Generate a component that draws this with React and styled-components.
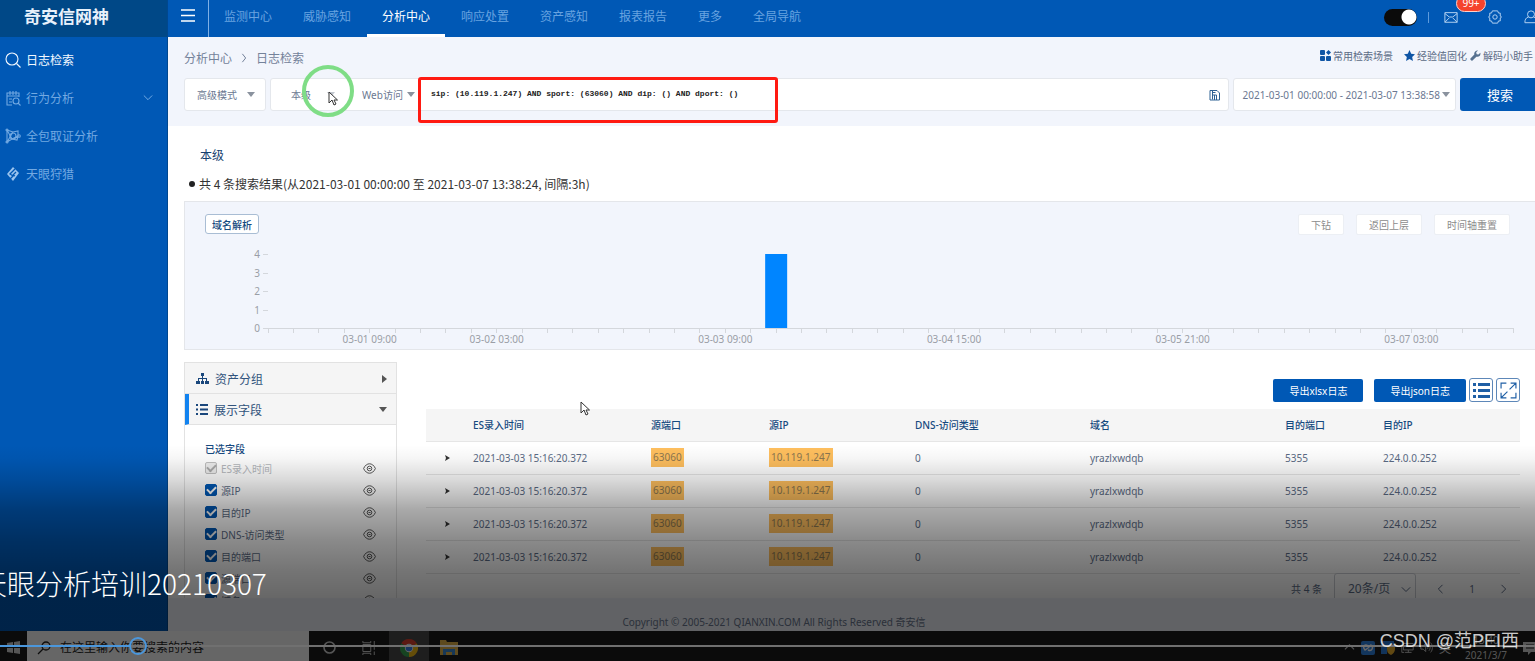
import { useState } from "react";
import styled, { createGlobalStyle } from "styled-components";

const GlobalStyle = createGlobalStyle`
  * {
    box-sizing: border-box;
  }
  body {
    margin: 0;
    overflow: hidden;
    font-family: "Noto Sans", "Noto Sans CJK SC", sans-serif;
    font-size: 10px;
    color: #5b6b85;
  }
  button, input, select {
    font-family: inherit;
    font-size: inherit;
    color: inherit;
  }
  h1, h2, h3, p, ul {
    margin: 0;
    padding: 0;
  }
  ul {
    list-style: none;
  }
  a {
    color: inherit;
    text-decoration: none;
  }
  svg {
    display: block;
    flex: none;
  }`

const Screen = styled.div`
  position: relative;
  display: flex;
  flex-direction: column;
  height: 100vh;
  overflow: hidden;`

const Page = styled.div`
  display: flex;
  flex: 1;
  min-height: 0;
  background-color: #f2f5fc;`

// Sidebar
const Sidebar = styled.aside`
  width: 168px;
  flex: none;
  background-color: #0058b5;
  border-right: 1px solid #00478f;`

const Brand = styled.h1`
  height: 37px;
  padding-left: 24px;
  line-height: 34px;
  font-size: 17px;
  font-weight: 700;
  color: #e8f1fb;
  background-color: #004887;`

const Menu = styled.ul`
  padding-top: 4px;`

const MenuLink = styled.a`
  display: flex;
  align-items: center;
  gap: 5px;
  height: 38px;
  padding: 0 14px 0 5px;
  font-size: 12px;
  color: ${({ $active }) => ($active ? "#f2f8ff" : "#72a9e2")};

  span {
    flex: 1;
  }`

// Header
const Main = styled.main`
  display: flex;
  flex-direction: column;
  flex: 1;
  min-width: 0;`

const Header = styled.header`
  display: flex;
  height: 37px;
  flex: none;
  background-color: #0058b5;`

const Burger = styled.button`
  display: flex;
  justify-content: center;
  width: 41px;
  padding: 9px 0 0;
  border: 0;
  border-right: 1px solid #7fb0e6;
  background: none;
  color: #fff;`

const Tabs = styled.nav`
  display: flex;
  gap: 1px;
  flex: 1;`

const Tab = styled.a`
  padding: 0 15px;
  line-height: 34px;
  font-size: 12px;
  color: ${({ $active }) => ($active ? "#fff" : "#68a3e0")};
  border-bottom: 3px solid ${({ $active }) => ($active ? "#fff" : "transparent")};`

const Tools = styled.div`
  display: flex;
  align-items: center;
  height: 34px;
  margin-right: -3px;
  color: #b5d3f3;`

const Switch = styled.input`
  appearance: none;
  width: 33px;
  height: 17px;
  margin: 0 11px 0 0;
  border-radius: 9px;
  background: radial-gradient(circle at 25px 8px, #fff 7px, #0b0b0b 8px);`

const Bar = styled.i`
  width: 1px;
  height: 11px;
  margin-right: 15px;
  background-color: #5e9bdc;`

const IconButton = styled.button`
  position: relative;
  padding: 0;
  margin: 0 ${({ $after = 0 }) => $after}px 0 0;
  border: 0;
  background: none;`

const Badge = styled.span`
  position: absolute;
  left: 12px;
  top: -15px;
  width: 30px;
  height: 17px;
  border: 1px solid #ffd0c8;
  border-radius: 9px;
  line-height: 15px;
  font-size: 10px;
  color: #fff;
  background-color: #f5432d;`

// Search area
const SearchArea = styled.section`
  position: relative;
  flex: none;
  height: 89px;
  padding-left: 16px;
  background-color: #f2f5fc;`

const TopLine = styled.div`
  display: flex;
  align-items: center;
  justify-content: space-between;
  height: 41px;
  padding-right: 2px;`

const Crumbs = styled.nav`
  display: flex;
  align-items: center;
  gap: 7px;
  font-size: 12px;
  color: #74829a;`

const Shortcuts = styled.div`
  display: flex;
  gap: 11px;
  padding-bottom: 4px;

  a {
    display: flex;
    align-items: center;
    gap: 2px;
  }
  a:last-child {
    margin-left: -8px;
  }`

const FilterRow = styled.form`
  display: flex;
  gap: 4px;`

const Field = styled.div`
  display: flex;
  align-items: center;
  flex: ${({ $grow }) => ($grow ? 1 : "none")};
  min-width: 0;
  height: 33px;
  border: 1px solid #e4e7ec;
  border-radius: 3px;
  background-color: #fff;
  color: #6b7891;`

const SelectBox = styled.label`
  display: grid;
  align-items: center;
  width: ${({ $width }) => $width}px;

  select, svg {
    grid-area: 1 / 1;
  }
  svg {
    justify-self: end;
    margin-right: ${({ $right = 10 }) => $right}px;
    pointer-events: none;
  }
  select {
    appearance: none;
    width: 100%;
    height: 30px;
    padding: 0 0 0 ${({ $left = 12 }) => $left}px;
    border: 0;
    background: none;
  }`

const Query = styled.input`
  flex: 1;
  min-width: 0;
  height: 30px;
  padding: 0 0 2px 14px;
  border: 0;
  background: none;
  font-family: "Liberation Mono", monospace;
  font-size: 8px;
  font-weight: 700;
  color: #222;`

const DateButton = styled.button`
  display: flex;
  align-items: center;
  gap: 2px;
  height: 30px;
  padding: 0 5px 0 9px;
  border: 0;
  background: none;`

const SearchButton = styled.button`
  width: 80px;
  height: 33px;
  margin-right: -5px;
  border: 0;
  border-radius: 3px;
  font-size: 13px;
  color: #fff;
  background-color: #0058b5;`

const Highlight = styled.div`
  position: absolute;
  left: 250px;
  top: 40px;
  width: 360px;
  height: 46px;
  border: 3px solid #ff1a12;
  border-radius: 3px;`

const ClickRing = styled.div`
  position: absolute;
  left: 134px;
  top: 28px;
  width: 52px;
  height: 52px;
  border: 4px solid #7fdd86;
  border-radius: 50%;`

const Pointer = styled.svg`
  position: absolute;
  left: ${({ $x }) => $x}px;
  top: ${({ $y }) => $y}px;`

// Results
const Results = styled.section`
  position: relative;
  flex: 1;
  min-height: 0;
  overflow: hidden;
  padding: 20px 0 0 16px;
  background-color: #fff;`

const Level = styled.h2`
  padding-left: 16px;
  line-height: 20px;
  font-size: 12px;
  font-weight: 400;
  color: #163f70;`

const Summary = styled.p`
  display: flex;
  align-items: center;
  gap: 4px;
  height: 35px;
  padding-left: 5px;
  font-family: "Noto Sans CJK SC", sans-serif;
  font-size: 12px;
  color: #333;

  &::before {
    content: "";
    width: 6px;
    height: 6px;
    border-radius: 50%;
    background-color: #222;
  }`

const ChartPanel = styled.div`
  height: 149px;
  border: 1px solid #e4e6ea;
  border-width: 1px 0 1px 1px;
  background-color: #f2f5fc;`

const ChartTop = styled.div`
  display: flex;
  align-items: center;
  gap: 12px;
  height: 44px;
  padding: 0 25px 0 20px;`

const Tag = styled.button`
  height: 20px;
  margin-right: auto;
  padding: 0 6px;
  border: 1px solid #a9bdd4;
  border-radius: 3px;
  font-weight: 500;
  color: #164a80;
  background-color: #fff;`

const PlainButton = styled.button`
  height: 21px;
  padding: 0 12px;
  border: 1px solid #eceff4;
  border-radius: 2px;
  color: #8c8c8c;
  background-color: #fff;`

const ChartSvg = styled.svg`
  width: calc(100% - 105px);
  height: 100px;
  margin-left: 83px;
  overflow: visible;

  text {
    font-size: 10px;
    fill: #9a9ea6;
  }
  line {
    stroke: #d4d7dc;
    shape-rendering: crispEdges;
  }`

const Columns = styled.div`
  display: flex;
  align-items: flex-start;
  gap: 29px;
  padding: 12px 15px 0 0;`

const SidePanel = styled.div`
  flex: none;
  width: 213px;
  height: 260px;
  border: 1px solid #e2e2e2;`

const PanelHead = styled.button`
  display: flex;
  align-items: center;
  gap: 6px;
  width: 100%;
  height: 31px;
  padding: 1px 9px 0 ${({ $open }) => ($open ? 7 : 11)}px;
  border: 0;
  border-left: ${({ $open }) => ($open ? "4px solid #1283f0" : "0")};
  border-bottom: 1px solid #e2e2e2;
  font-size: 12px;
  color: #31537c;
  background-color: #f5f5f5;

  span {
    flex: 1;
    text-align: left;
  }`

const FieldTitle = styled.h3`
  padding: 16px 20px 0;
  line-height: 16px;
  font-size: 10px;
  font-weight: 500;
  color: #164a80;`

const FieldItem = styled.li`
  display: flex;
  align-items: center;
  justify-content: space-between;
  height: 22px;
  padding: 0 20px;
  color: ${({ $off }) => ($off ? "#b5b8bd" : "#5b6b85")};

  label {
    display: flex;
    align-items: center;
    gap: 4px;
  }`

const Check = styled.input`
  appearance: none;
  display: grid;
  place-items: center;
  width: 12px;
  height: 12px;
  margin: 0;
  border: 1px solid ${({ disabled }) => (disabled ? "#bfbfbf" : "#0058b5")};
  border-radius: 2px;
  background-color: ${({ disabled }) => (disabled ? "#eee" : "#0058b5")};

  &:checked::after {
    content: "";
    width: 7px;
    height: 4px;
    margin-bottom: 2px;
    border: solid ${({ disabled }) => (disabled ? "#aaa" : "#fff")};
    border-width: 0 0 2px 2px;
    rotate: -45deg;
  }`

const TableSide = styled.div`
  flex: 1;
  min-width: 0;
  padding-top: 16px;`

const Exports = styled.div`
  display: flex;
  align-items: center;
  justify-content: flex-end;
  gap: 3px;
  height: 24px;
  margin-bottom: 7px;`

const ExportButton = styled.button`
  height: 23px;
  padding: 0 16px;
  margin-left: 8px;
  border: 0;
  border-radius: 2px;
  color: #fff;
  background-color: #0058b5;`

const ViewButton = styled.button`
  display: grid;
  place-items: center;
  width: 24px;
  height: 24px;
  padding: 0;
  border: 1px solid #5d87b8;
  border-radius: 3px;
  background-color: #fff;
  color: #1f5fa5;`

const Table = styled.table`
  width: 100%;
  table-layout: fixed;
  border-collapse: collapse;

  th, td {
    height: 33px;
    padding: 0;
    border-bottom: 1px solid #e6e6e6;
    text-align: left;
    white-space: nowrap;
  }
  th {
    height: 32px;
    font-weight: 500;
    color: #164a80;
    background-color: #f5f5f5;
  }
  td:first-child button {
    display: block;
    padding: 0 0 0 19px;
    border: 0;
    background: none;
  }`

const Mark = styled.mark`
  display: inline-block;
  padding: 0 2px;
  line-height: 19px;
  color: #8d7750;
  background-color: #ffbf5e;`

const Pager = styled.div`
  display: flex;
  align-items: center;
  justify-content: flex-end;
  height: 30px;

  button {
    display: flex;
    justify-content: center;
    width: 32px;
    padding: 0;
    border: 0;
    background: none;
  }`

const PageSize = styled.div`
  margin: 0 8px 0 12px;
  border: 1px solid #c9ccd2;
  border-radius: 3px;
  font-size: 12px;`

const Copyright = styled.footer`
  flex: none;
  height: 33px;
  padding-right: 155px;
  line-height: 48px;
  text-align: center;
  font-size: 10px;
  color: #6b7891;`

// Taskbar
const Taskbar = styled.div`
  display: flex;
  flex: none;
  height: 30px;
  background-color: #1b1b1b;
  color: #d5d5d5;`

const TaskButton = styled.button`
  display: grid;
  place-items: center;
  width: ${({ $width = 40 }) => $width}px;
  padding: 3px 0 0;
  border: 0;
  background-color: ${({ $active }) => ($active ? "#4a4a4a" : "transparent")};`

const TaskSearch = styled.label`
  display: flex;
  align-items: center;
  gap: 9px;
  width: 282px;
  padding: 3px 10px 0;
  color: #222;
  background-color: #fff;

  input {
    flex: 1;
    padding: 0;
    border: 0;
    background: none;
    font-size: 12px;
  }
  input::placeholder {
    color: #222;
    opacity: 1;
  }`

const Tray = styled.div`
  display: flex;
  align-items: center;
  gap: 6px;
  margin-left: auto;
  margin-right: -2px;
  padding-top: 3px;
  font-size: 12px;`

const Clock = styled.time`
  width: 58px;
  margin-right: 2px;
  line-height: 15px;
  text-align: center;
  font-size: 10px;`

// Player controls lie over the whole screen
const Player = styled.div`
  position: absolute;
  left: 0;
  right: 0;
  bottom: 0;
  height: 216px;
  background: linear-gradient(
    rgba(0, 0, 0, 0) 0,
    rgba(0, 0, 0, 0.04) 14px,
    rgba(0, 0, 0, 0.15) 35px,
    rgba(0, 0, 0, 0.34) 65px,
    rgba(0, 0, 0, 0.46) 95px,
    rgba(0, 0, 0, 0.54) 125px,
    rgba(0, 0, 0, 0.6) 155px
  );`

const VideoTitle = styled.div`
  position: absolute;
  left: -21px;
  bottom: 58px;
  line-height: 40px;
  font-family: "Noto Sans CJK SC", sans-serif;
  font-size: 28px;
  font-weight: 300;
  white-space: nowrap;
  color: #fff;`

const Progress = styled.input`
  position: absolute;
  left: 0;
  bottom: 6px;
  width: 100%;
  height: 18px;
  margin: 0;
  appearance: none;
  background: none;

  &::-webkit-slider-runnable-track {
    height: 2px;
    background: linear-gradient(90deg, #4b97dc ${({ $done }) => $done}%, #707070 0);
  }
  &::-webkit-slider-thumb {
    appearance: none;
    width: 18px;
    height: 18px;
    margin-top: -8px;
    border: 2px solid #4b97dc;
    border-radius: 50%;
    background: none;
  }`

const Watermark = styled.div`
  position: absolute;
  right: 16px;
  bottom: 6px;
  line-height: 28px;
  font-family: "Liberation Sans", "Noto Sans CJK SC", sans-serif;
  font-size: 18px;
  color: rgba(255, 255, 255, 0.8);`

const Caret = ({ size = 8, color = "#8a929e" }) => (
  <svg width={size} height="5" viewBox="0 0 8 5"><path d="M0 0h8L4 5z" fill={color}/></svg>
)

const Chevron = ({ d = "M3 1l5 5-5 5", size = 10 }) => (
  <svg width={size} height={size} viewBox="0 0 12 12" fill="none" stroke="currentColor" strokeWidth="1.2">
    <path d={d}/>
  </svg>
)

const Line = ({ size = 15, children }) => (
  <svg width={size} height={size} viewBox="0 0 16 16" fill="none" stroke="currentColor" strokeWidth="1.1">
    {children}
  </svg>
)

const Cursor = ({ x, y }) => (
  <Pointer $x={x} $y={y} width="10" height="15" viewBox="0 0 10 15">
    <path d="M1 1v11l3-3 2 5 2-1-2-4h3.500z" fill="#fff" stroke="#333"/>
  </Pointer>
)

const Eye = () => (
  <svg width="13" height="11" viewBox="0 0 13 11" fill="none" stroke="#555" strokeWidth="1">
    <path d="M.6 5.500C3.400-.8 9.600-.8 12.400 5.500C9.600 11.800 3.400 11.800.6 5.500z"/>
    <circle cx="6.500" cy="5.500" r="2.300"/>
    <path d="M5.500 5.500h2"/>
  </svg>
)

const menu = [
  { title: "日志检索", active: true, icon: <Line size={16}><circle cx="7" cy="7" r="6"/><path d="M11.500 11.500l4 4"/></Line> },
  {
    title: "行为分析",
    more: true,
    icon: <Line size={16}><path d="M14 7V3H2v12h5M5 1v4M8 1v4M11 1v4M2 6h12M4 9h3M4 12h3"/><circle cx="11" cy="11" r="3"/><path d="M13 13l2.500 2.500"/></Line>,
  },
  {
    title: "全包取证分析",
    icon: <Line size={16}><path d="M2 2l6 2 5-1v5l-1 4-5-1-5 3zM2 2l5 9M8 4l-6 10M13 8L7 11"/><circle cx="8" cy="8" r="3"/><circle cx="2" cy="2" r="1"/><circle cx="2" cy="14" r="1"/><circle cx="14" cy="8" r="1.300"/></Line>,
  },
  {
    title: "天眼狩猎",
    icon: (
      <svg width="16" height="16" viewBox="0 0 16 16">
        <path d="M8 1l6 6-6 8-6-7z" fill="#9cc4ee"/>
        <path d="M10 3L5 8l3 2-3 3M11 6L8 9l2 1" fill="none" stroke="#0058b5" strokeWidth="1.300"/>
      </svg>
    ),
  },
]

const tabs = ["监测中心", "威胁感知", "分析中心", "响应处置", "资产感知", "报表报告", "更多", "全局导航"]
const fields = ["ES录入时间", "源IP", "目的IP", "DNS-访问类型", "目的端口", "源端口", "域名"]
const heads = ["ES录入时间", "源端口", "源IP", "DNS-访问类型", "域名", "目的端口", "目的IP"]
const widths = [47, 178, 118, 146, 175, 195, 98, 137]
const logs = [1, 2, 3, 4].map((id) => ({
  id,
  time: "2021-03-03 15:16:20.372",
  port: "63060",
  ip: "10.119.1.247",
  type: "0",
  domain: "yrazlxwdqb",
  toPort: "5355",
  toIp: "224.0.0.252",
}))

const dates = [
  [4, "03-01 09:00"],
  [9, "03-02 03:00"],
  [18, "03-03 09:00"],
  [27, "03-04 15:00"],
  [36, "03-05 21:00"],
  [45, "03-07 03:00"],
]
const STEPS = 49
const BASE = 82
const at = (i) => `${(i / STEPS) * 100}%`

const Chart = () => (
  <ChartSvg>
    {[0, 1, 2, 3, 4].map((n) => (
      <g key={n}>
        <text x="-8" y={Math.round(BASE - n * 18.5) + 4} textAnchor="end">{n}</text>
        <line x1="-5" x2="0" y1={Math.round(BASE - n * 18.5)} y2={Math.round(BASE - n * 18.5)}/>
      </g>
    ))}
    <line x1="0" x2="100%" y1={BASE} y2={BASE}/>
    {Array.from({ length: STEPS + 1 }, (_, i) => (
      <line key={i} x1={at(i)} x2={at(i)} y1={BASE} y2={BASE + 5}/>
    ))}
    {dates.map(([i, text]) => (
      <text key={text} x={at(i)} y={BASE + 15} textAnchor="middle">{text}</text>
    ))}
    <svg x={at(20)} y={BASE - 74} overflow="visible">
      <rect x="-11" width="22" height="74" fill="#0085ff"/>
    </svg>
  </ChartSvg>
)

const App = () => {
  const [query, setQuery] = useState("sip: (10.119.1.247) AND sport: (63060) AND dip: () AND dport: ()")
  const [progress, setProgress] = useState(8.5)

  return (
    <Screen>
      <GlobalStyle/>
      <Page>
        <Sidebar>
          <Brand>奇安信网神</Brand>
          <Menu>
            {menu.map(({ title, active, more, icon }) => (
              <li key={title}>
                <MenuLink href="#" $active={active}>
                  {icon}
                  <span>{title}</span>
                  {more && <Chevron d="M1 3l5 5 5-5"/>}
                </MenuLink>
              </li>
            ))}
          </Menu>
        </Sidebar>
        <Main>
          <Header>
            <Burger aria-label="菜单">
              <svg width="14" height="13" viewBox="0 0 14 13" stroke="currentColor" strokeWidth="1.500">
                <path d="M0 1h14M0 6.500h14M0 12h14"/>
              </svg>
            </Burger>
            <Tabs>
              {tabs.map((tab) => (
                <Tab key={tab} href="#" $active={tab === "分析中心"}>{tab}</Tab>
              ))}
            </Tabs>
            <Tools>
              <Switch type="checkbox" role="switch" aria-label="主题" defaultChecked/>
              <Bar/>
              <IconButton aria-label="消息" $after={30}>
                <Line size={14}><path d="M1 3h14v11H1zM1 4l5 4h4l5-4M1 14l5-5M15 14l-5-5"/></Line>
                <Badge>99+</Badge>
              </IconButton>
              <IconButton aria-label="设置" $after={22}>
                <Line size={14}><path d="M5 1h6l1 2.500h2V7l1.500 1L14 9v3.500h-2L11 15H5l-1-2.500H2V9L.5 8 2 7V3.500h2z"/><circle cx="8" cy="8" r="2.500"/></Line>
              </IconButton>
              <IconButton aria-label="用户">
                <Line size={14}><circle cx="8" cy="5" r="4"/><path d="M5 8c-3 1-4 3-4 6.500h14c0-3.500-1-5.500-4-6.500"/></Line>
              </IconButton>
            </Tools>
          </Header>
          <SearchArea>
            <TopLine>
              <Crumbs>
                <a href="#">分析中心</a>
                <Chevron d="M4 1l4 5-4 5"/>
                <a href="#">日志检索</a>
              </Crumbs>
              <Shortcuts>
                <a href="#">
                  <svg width="11" height="11" viewBox="0 0 11 11" fill="#0f55a5">
                    <rect width="5" height="5" rx="1"/><rect y="6" width="5" height="5" rx="1"/><path d="M8.500 0L11 2.500 8.500 5 6 2.500z"/><rect x="6" y="6" width="5" height="5" rx="1"/>
                  </svg>
                  常用检索场景
                </a>
                <a href="#">
                  <svg width="11" height="11" viewBox="0 0 24 24" fill="#0f55a5"><path d="M12 0l3.700 8 8.300 1-6.200 6 1.700 9-7.500-4.500L4.500 24l1.700-9L0 9l8.300-1z"/></svg>
                  经验值固化
                </a>
                <a href="#">
                  <svg width="11" height="11" viewBox="0 0 24 24" fill="#56708f"><path d="M22.500 6l-4 4-4-1-1-4 4-4C13 0 8 4 9.500 10L1 18.500C-.5 21 3 24.500 5.500 23L14 14.500c6 1.500 10-3.500 8.500-8.500z"/></svg>
                  解码小助手
                </a>
              </Shortcuts>
            </TopLine>
            <FilterRow onSubmit={(e) => e.preventDefault()}>
              <Field>
                <SelectBox $width={80}>
                  <select aria-label="模式"><option>高级模式</option></select>
                  <Caret/>
                </SelectBox>
              </Field>
              <Field $grow>
                <SelectBox $width={70} $left={20} $right={6}>
                  <select aria-label="级别"><option>本级</option></select>
                  <Caret color="#c3c8d0"/>
                </SelectBox>
                <SelectBox $width={76} $left={21} $right={2}>
                  <select aria-label="类型"><option>Web访问</option></select>
                  <Caret/>
                </SelectBox>
                <Query aria-label="查询" value={query} onChange={(e) => setQuery(e.target.value)}/>
                <IconButton type="button" aria-label="保存" $after={8}>
                  <svg width="11" height="12" viewBox="0 0 11 12" fill="none" stroke="#2f6294">
                    <path d="M1 1.500h7l2.500 2.500v7H1zM3.500 1.500v9M3.500 6h4v5M5.500 6v5M3.500 3.500h3"/>
                  </svg>
                </IconButton>
              </Field>
              <Field>
                <DateButton type="button">2021-03-01 00:00:00 - 2021-03-07 13:38:58 <Caret/></DateButton>
              </Field>
              <SearchButton>搜索</SearchButton>
            </FilterRow>
            <ClickRing/>
            <Highlight/>
            <Cursor x={160} y={54}/>
          </SearchArea>
          <Results>
            <Level>本级</Level>
            <Summary>共 4 条搜索结果(从2021-03-01 00:00:00 至 2021-03-07 13:38:24, 间隔:3h)</Summary>
            <ChartPanel>
              <ChartTop>
                <Tag>域名解析</Tag>
                <PlainButton>下钻</PlainButton>
                <PlainButton>返回上层</PlainButton>
                <PlainButton>时间轴重置</PlainButton>
              </ChartTop>
              <Chart/>
            </ChartPanel>
            <Columns>
              <SidePanel>
                <PanelHead>
                  <svg width="13" height="11" viewBox="0 0 13 11" fill="#1a477c">
                    <path d="M5 0h3v3H7v2h4v3h2v3H9V8h1V6H7v2h1v3H5V8h1V6H3v2h1v3H0V8h2V5h4V3H5z"/>
                  </svg>
                  <span>资产分组</span>
                  <svg width="5" height="8" viewBox="0 0 5 8"><path d="M0 0v8l5-4z" fill="#555"/></svg>
                </PanelHead>
                <PanelHead $open>
                  <svg width="12" height="11" viewBox="0 0 12 11" fill="#1a477c">
                    <path d="M0 0h2v2H0zM4 0h8v2H4zM0 4.500h2v2H0zM4 4.500h8v2H4zM0 9h2v2H0zM4 9h8v2H4z"/>
                  </svg>
                  <span>展示字段</span>
                  <Caret color="#555"/>
                </PanelHead>
                <FieldTitle>已选字段</FieldTitle>
                <ul>
                  {fields.map((name, i) => (
                    <FieldItem key={name} $off={i === 0}>
                      <label><Check type="checkbox" defaultChecked disabled={i === 0}/>{name}</label>
                      <Eye/>
                    </FieldItem>
                  ))}
                </ul>
              </SidePanel>
              <TableSide>
                <Exports>
                  <ExportButton>导出xlsx日志</ExportButton>
                  <ExportButton>导出json日志</ExportButton>
                  <ViewButton aria-label="列表">
                    <svg width="17" height="15" viewBox="0 0 17 15" fill="currentColor">
                      <path d="M0 0h3v3H0zM5 0h12v3H5zM0 6h3v3H0zM5 6h12v3H5zM0 12h3v3H0zM5 12h12v3H5z"/>
                    </svg>
                  </ViewButton>
                  <ViewButton aria-label="全屏">
                    <Line size={17}><path d="M1 6V1h5M10 1h5v5M15 10v5h-5M6 15H1v-5M15 1L9 7M7 9l-6 6"/></Line>
                  </ViewButton>
                </Exports>
                <Table>
                  <colgroup>
                    {widths.map((w, i) => <col key={i} width={w}/>)}
                  </colgroup>
                  <thead>
                    <tr>
                      <th/>
                      {heads.map((head) => <th key={head}>{head}</th>)}
                    </tr>
                  </thead>
                  <tbody>
                    {logs.map((log) => (
                      <tr key={log.id}>
                        <td>
                          <button aria-label="展开">
                            <svg width="5" height="6" viewBox="0 0 5 6"><path d="M0 0l5 3-5 3 1-3z" fill="#333"/></svg>
                          </button>
                        </td>
                        <td>{log.time}</td>
                        <td><Mark>{log.port}</Mark></td>
                        <td><Mark>{log.ip}</Mark></td>
                        <td>{log.type}</td>
                        <td>{log.domain}</td>
                        <td>{log.toPort}</td>
                        <td>{log.toIp}</td>
                      </tr>
                    ))}
                  </tbody>
                </Table>
                <Pager>
                  共 4 条
                  <PageSize>
                    <SelectBox $width={80} $left={13} $right={4}>
                      <select aria-label="每页条数"><option>20条/页</option></select>
                      <Chevron d="M1 4l5 5 5-5"/>
                    </SelectBox>
                  </PageSize>
                  <button aria-label="上一页"><Chevron d="M9 1L4 6l5 5"/></button>
                  <button>1</button>
                  <button aria-label="下一页"><Chevron/></button>
                </Pager>
              </TableSide>
            </Columns>
            <Cursor x={412} y={275}/>
          </Results>
          <Copyright>Copyright © 2005-2021 QIANXIN.COM All Rights Reserved 奇安信</Copyright>
        </Main>
      </Page>
      <Taskbar>
        <TaskButton $width={27} aria-label="开始">
          <svg width="13" height="13" viewBox="0 0 13 13" fill="currentColor"><path d="M0 2l6-1v5H0zM7 1l6-1v6H7zM0 7h6v5l-6-1zM7 7h6v6l-6-1z"/></svg>
        </TaskButton>
        <TaskSearch>
          <svg width="14" height="14" viewBox="0 0 14 14" fill="none" stroke="currentColor" strokeWidth="1.300"><circle cx="9" cy="5" r="4"/><path d="M6 8l-5 5"/></svg>
          <input placeholder="在这里输入你要搜索的内容"/>
        </TaskSearch>
        <TaskButton aria-label="Cortana">
          <svg width="13" height="13" viewBox="0 0 13 13" fill="none" stroke="currentColor" strokeWidth="1.600"><circle cx="6.500" cy="6.500" r="5.500"/></svg>
        </TaskButton>
        <TaskButton aria-label="任务视图">
          <Line size={14}><path d="M1 4h9v8H1zM1 0v2h9V0M1 16v-2h9v2M14 0v5M14 7v3M14 12v4"/></Line>
        </TaskButton>
        <TaskButton $active aria-label="Chrome">
          <svg width="18" height="18" viewBox="0 0 18 18">
            <path d="M9 9L1.200 4.500A9 9 0 0 1 16.800 4.500z" fill="#e2402f"/>
            <path d="M9 9L1.200 4.500A9 9 0 0 0 9 18z" fill="#36a852"/>
            <path d="M9 9l7.800-4.500A9 9 0 0 1 9 18z" fill="#fbc116"/>
            <circle cx="9" cy="9" r="4.200" fill="#fff"/>
            <circle cx="9" cy="9" r="3.300" fill="#3f83f1"/>
          </svg>
        </TaskButton>
        <TaskButton aria-label="文件资源管理器">
          <svg width="18" height="15" viewBox="0 0 18 15"><path d="M0 0h6l1 2h11v13H0z" fill="#e9b84a"/><path d="M3 15V9h12v6h-3v-3H6v3z" fill="#3b8bd8"/></svg>
        </TaskButton>
        <Tray>
          <Chevron d="M1 8l5-5 5 5" size={11}/>
          <svg width="14" height="14" viewBox="0 0 14 14"><rect width="14" height="14" rx="2" fill="#2f86e8"/><path d="M7 5C4 2 1 6 4 9l3-2 3-3c3 2 1 7-3 5" fill="none" stroke="#fff" strokeWidth="1.400"/></svg>
          <svg width="14" height="14" viewBox="0 0 14 14"><path d="M0 0h13v6H6v7H0z" fill="#2b7fe0"/><path d="M6 5l8-2v5c0 3-2 5-4 6-3-1-4-3-4-6z" fill="#f3b52c"/></svg>
          <Line size={13}><path d="M3 3h12v8H3zM9 11v3M5 14h8M1 6v8h3"/></Line>
          <Line size={13}><path d="M1 6h3l3-3v10l-3-3H1zM9 6c1 1 1 3 0 4M11 4c2 2 2 6 0 8M13 2c3 3 3 9 0 12"/></Line>
          英
          <Clock>13:40<br/>2021/3/7</Clock>
          <svg width="14" height="14" viewBox="0 0 14 14" fill="currentColor"><path d="M0 1h14v10H8l-3 3v-3H0z"/><path d="M3 4h8M3 7h8" stroke="#1b1b1b"/></svg>
        </Tray>
      </Taskbar>
      <Player>
        <VideoTitle>天眼分析培训20210307</VideoTitle>
        <Progress
          type="range"
          aria-label="播放进度"
          min="0"
          max="100"
          step="0.1"
          value={progress}
          $done={progress}
          onChange={(e) => setProgress(Number(e.target.value))}
        />
        <Watermark>CSDN @范PEI西</Watermark>
      </Player>
    </Screen>
  )
}

export default App;
